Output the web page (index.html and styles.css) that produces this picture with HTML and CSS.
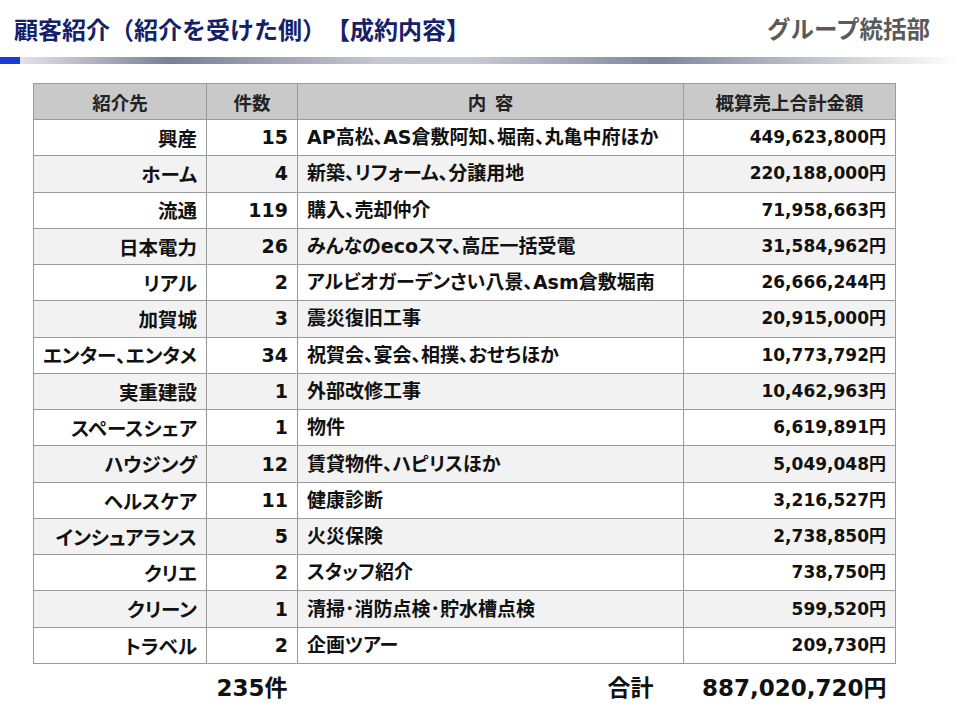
FILE: index.html
```html
<!DOCTYPE html>
<html lang="ja">
<head>
<meta charset="utf-8">
<link rel="stylesheet" href="styles.css">
</head>
<body>
<header class="top">
  <h1 class="title">顧客紹介（紹介を受けた側）【成約内容】</h1>
  <div class="dept">グループ統括部</div>
</header>
<div class="rule"><span class="rule-blue"></span><span class="rule-grad"></span></div>
<main class="wrap">
<table class="tbl">
  <colgroup><col class="c1"><col class="c2"><col class="c3"><col class="c4"></colgroup>
  <thead>
    <tr><th>紹介先</th><th>件数</th><th>内&nbsp;&nbsp;容</th><th>概算売上合計金額</th></tr>
  </thead>
  <tbody>
    <tr><td class="r">興産</td><td class="k">15</td><td class="l">AP高松、AS倉敷阿知、堀南、丸亀中府ほか</td><td class="n">449,623,800円</td></tr>
    <tr><td class="r">ホーム</td><td class="k">4</td><td class="l">新築、リフォーム、分譲用地</td><td class="n">220,188,000円</td></tr>
    <tr><td class="r">流通</td><td class="k">119</td><td class="l">購入、売却仲介</td><td class="n">71,958,663円</td></tr>
    <tr><td class="r">日本電力</td><td class="k">26</td><td class="l">みんなのecoスマ、高圧一括受電</td><td class="n">31,584,962円</td></tr>
    <tr><td class="r">リアル</td><td class="k">2</td><td class="l">アルビオガーデンさい八景、Asm倉敷堀南</td><td class="n">26,666,244円</td></tr>
    <tr><td class="r">加賀城</td><td class="k">3</td><td class="l">震災復旧工事</td><td class="n">20,915,000円</td></tr>
    <tr><td class="r">エンター、エンタメ</td><td class="k">34</td><td class="l">祝賀会、宴会、相撲、おせちほか</td><td class="n">10,773,792円</td></tr>
    <tr><td class="r">実重建設</td><td class="k">1</td><td class="l">外部改修工事</td><td class="n">10,462,963円</td></tr>
    <tr><td class="r">スペースシェア</td><td class="k">1</td><td class="l">物件</td><td class="n">6,619,891円</td></tr>
    <tr><td class="r">ハウジング</td><td class="k">12</td><td class="l">賃貸物件、ハピリスほか</td><td class="n">5,049,048円</td></tr>
    <tr><td class="r">ヘルスケア</td><td class="k">11</td><td class="l">健康診断</td><td class="n">3,216,527円</td></tr>
    <tr><td class="r">インシュアランス</td><td class="k">5</td><td class="l">火災保険</td><td class="n">2,738,850円</td></tr>
    <tr><td class="r">クリエ</td><td class="k">2</td><td class="l">スタッフ紹介</td><td class="n">738,750円</td></tr>
    <tr><td class="r">クリーン</td><td class="k">1</td><td class="l">清掃･消防点検･貯水槽点検</td><td class="n">599,520円</td></tr>
    <tr><td class="r">トラベル</td><td class="k">2</td><td class="l">企画ツアー</td><td class="n">209,730円</td></tr>
  </tbody>
  <tfoot>
    <tr><td></td><td class="tc">235件</td><td class="tr">合計</td><td class="n big">887,020,720円</td></tr>
  </tfoot>
</table>
</main>
</body>
</html>
```

FILE: styles.css
```css
html, body {
  margin: 0;
  padding: 0;
  background: #fff;
}
body {
  width: 960px;
  height: 720px;
  overflow: hidden;
  font-family: "DejaVu Sans", "Noto Sans CJK JP", sans-serif;
  font-feature-settings: "palt";
  color: #111;
}
.top {
  display: flex;
  justify-content: space-between;
  align-items: center;
  height: 56px;
  padding: 0 30px 0 14px;
}
.title {
  margin: 0;
  font-family: "Noto Sans CJK JP", sans-serif;
  font-size: 24px;
  font-weight: 700;
  color: #13216a;
  letter-spacing: 0;
  font-feature-settings: normal;
  text-spacing-trim: space-all;
}
.dept {
  font-family: "Noto Sans CJK JP", sans-serif;
  font-size: 23.5px;
  font-weight: 700;
  color: #5a5a5a;
  font-feature-settings: normal;
}
.rule {
  display: flex;
  height: 7px;
  margin-top: 1px;
}
.rule-blue {
  width: 20px;
  background: #1a3ad8;
}
.rule-grad {
  flex: 1;
  background: linear-gradient(90deg, #e3e3e8 0%, #7a7f96 16%, #c4c6d0 38%, #c8cad3 48%, #80859c 68%, #d9dade 90%, #ffffff 100%);
}
.wrap {
  padding: 19px 0 0 33px;
}
.tbl {
  width: 862px;
  border-collapse: collapse;
  table-layout: fixed;
}
.c1 { width: 173px; }
.c2 { width: 91px; }
.c3 { width: 386px; }
.c4 { width: 212px; }
.tbl th {
  height: 35px;
  padding: 0;
  background: #c9c9c9;
  border: 1px solid #9a9a9a;
  font-family: "Noto Sans CJK JP", sans-serif;
  font-size: 18.5px;
  font-weight: 700;
  color: #222;
  text-align: center;
}
.tbl tbody td {
  height: 36.27px;
  padding: 0 9px 0 9px;
  border: 1px solid #9a9a9a;
  font-size: 18px;
  font-weight: 700;
  white-space: nowrap;
  line-height: 1;
  box-sizing: border-box;
}
.tbl tbody tr:nth-child(even) td {
  background: #f2f2f2;
}
.tbl td.r {
  text-align: right;
  font-family: "Noto Sans CJK JP", sans-serif;
  font-size: 19.5px;
}
.tbl td.k {
  text-align: right;
  font-size: 19px;
}
.tbl td.l {
  text-align: left;
  font-size: 19px;
}
.tbl td.n {
  text-align: right;
  font-size: 17px;
}
.tbl tfoot td {
  height: 44px;
  padding: 0 9px;
  border: none;
  font-weight: 700;
  font-size: 23px;
  white-space: nowrap;
}
.tbl tfoot td.tc {
  text-align: center;
  padding: 0;
}
.tbl tfoot td.tr {
  text-align: right;
  padding-right: 30px;
  font-family: "Noto Sans CJK JP", sans-serif;
  font-size: 23px;
}
.tbl tfoot td.big {
  font-size: 23px;
}
```
